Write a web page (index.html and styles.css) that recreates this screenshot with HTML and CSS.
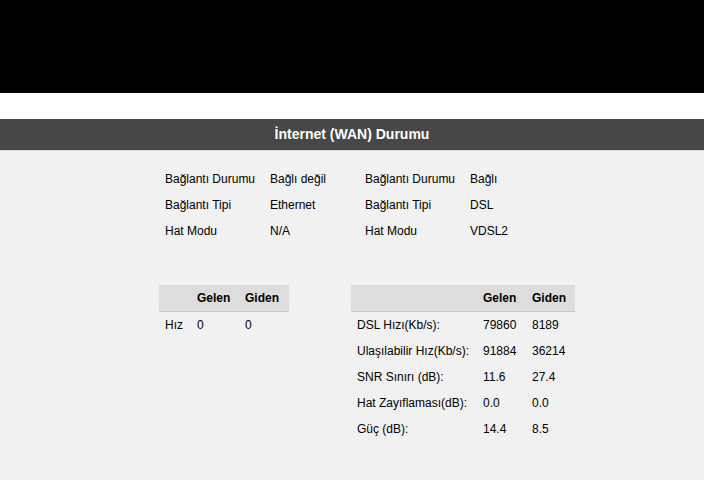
FILE: index.html
```html
<!DOCTYPE html>
<html lang="tr">

<head>
  <meta charset="UTF-8">
  <meta name="viewport" content="width=device-width, initial-scale=1.0">
  <title>İnternet (WAN) Durumu</title>
  <link rel="stylesheet" href="styles.css">
</head>

<body>
  <header class="masthead"></header>
  <div class="spacer"></div>

  <section class="panel">
    <h1 class="panel-title">İnternet (WAN) Durumu</h1>

    <div class="info">
      <table class="info-table">
        <tr><td>Bağlantı Durumu</td><td>Bağlı değil</td></tr>
        <tr><td>Bağlantı Tipi</td><td>Ethernet</td></tr>
        <tr><td>Hat Modu</td><td>N/A</td></tr>
      </table>
      <table class="info-table">
        <tr><td>Bağlantı Durumu</td><td>Bağlı</td></tr>
        <tr><td>Bağlantı Tipi</td><td>DSL</td></tr>
        <tr><td>Hat Modu</td><td>VDSL2</td></tr>
      </table>
    </div>

    <div class="stats">
      <table class="stats-table eth">
        <thead>
          <tr><th class="c-label"></th><th class="c-down">Gelen</th><th class="c-up">Giden</th></tr>
        </thead>
        <tbody>
          <tr><td>Hız</td><td>0</td><td>0</td></tr>
        </tbody>
      </table>

      <table class="stats-table dsl">
        <thead>
          <tr><th class="c-label"></th><th class="c-down">Gelen</th><th class="c-up">Giden</th></tr>
        </thead>
        <tbody>
          <tr><td>DSL Hızı(Kb/s):</td><td>79860</td><td>8189</td></tr>
          <tr><td>Ulaşılabilir Hız(Kb/s):</td><td>91884</td><td>36214</td></tr>
          <tr><td>SNR Sınırı (dB):</td><td>11.6</td><td>27.4</td></tr>
          <tr><td>Hat Zayıflaması(dB):</td><td>0.0</td><td>0.0</td></tr>
          <tr><td>Güç (dB):</td><td>14.4</td><td>8.5</td></tr>
        </tbody>
      </table>
    </div>
  </section>
</body>

</html>
```

FILE: styles.css
```css
body {
  margin: 0;
  font-family: "Liberation Sans", Arial, sans-serif;
  font-size: 12px;
  color: #000;
  background-color: #f1f1f1;
  height: 100vh;
  overflow: hidden;
}

.masthead {
  height: 93px;
  background: #000;
}

.spacer {
  height: 26px;
  background: #fff;
}

.panel-title {
  margin: 0;
  height: 31px;
  line-height: 31px;
  background: #474747;
  border-bottom: 1px solid #d9d9d9;
  color: #fff;
  font-size: 14px;
  font-weight: bold;
  text-align: center;
}

table {
  border-collapse: collapse;
  border-spacing: 0;
}

td,
th {
  padding: 0 6px;
  text-align: left;
  white-space: nowrap;
}

.info {
  display: flex;
  padding: 15px 0 0 159px;

  .info-table {
    td {
      height: 26px;
      line-height: 14px;
    }

    td:first-child {
      width: 93px;
    }

    td:last-child {
      width: 83px;
    }
  }
}

.stats {
  display: flex;
  align-items: flex-start;
  gap: 62px;
  padding: 41px 0 0 159px;
}

.stats-table {
  th {
    height: 26px;
    background: #dddddd;
    border-bottom: 1px solid #c9c9c9;
    font-weight: bold;
  }

  td {
    height: 26px;
    line-height: 14px;
  }

  .c-down {
    width: 37px;
  }

  .c-up {
    width: 37px;
  }

  &.eth .c-label {
    width: 20px;
  }

  &.eth .c-down {
    width: 36px;
  }

  &.eth .c-up {
    width: 38px;
  }

  &.dsl .c-label {
    width: 114px;
  }
}
```
